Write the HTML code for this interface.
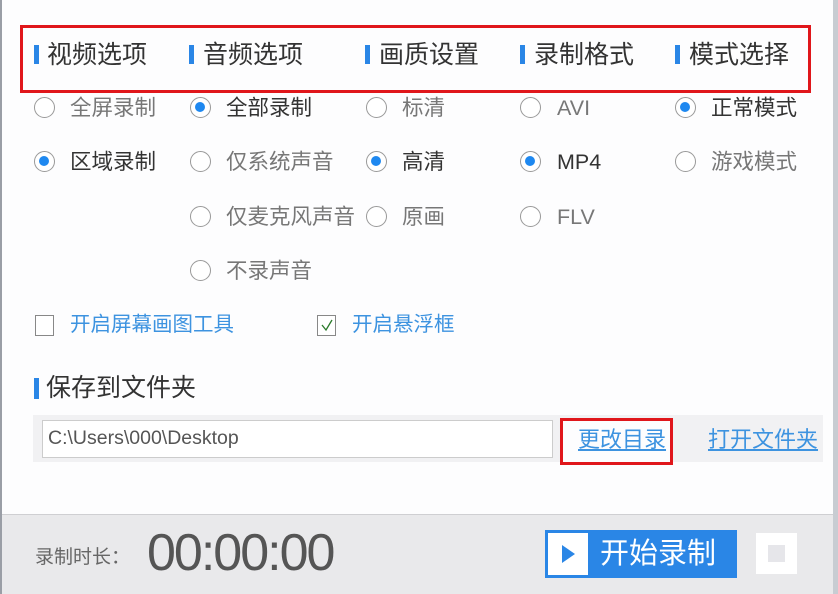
<!DOCTYPE html>
<html><head><meta charset="utf-8"><style>
*{margin:0;padding:0;box-sizing:border-box}
body{width:838px;height:594px;background:#fdfdfe;position:relative;overflow:hidden;font-family:"Liberation Sans","Noto Sans CJK SC",sans-serif}
.a{position:absolute;white-space:nowrap}
.h{font-size:25px;color:#333;line-height:30px}
.bar{position:absolute;width:5px;height:19px;background:#2a86e6}
.r{position:absolute;width:21px;height:21px;border:1.5px solid #999;border-radius:50%;background:#fff}
.r.on::after{content:"";position:absolute;left:4px;top:4px;width:10px;height:10px;border-radius:50%;background:#1e88f0}
.t{font-size:21.5px;color:#777;line-height:24px}
.t.d{color:#333}
.lk{font-size:20.5px;color:#3d93e0;line-height:24px}
</style></head><body>
<div class="a" style="left:0;top:0;width:2px;height:594px;background:#9a9ea6"></div>
<div class="a" style="left:833px;top:0;width:5px;height:594px;background:#c8ccd2"></div>

<div class="a" style="left:20px;top:25px;width:791px;height:68px;border:3px solid #e0161b"></div>
<div class="bar" style="left:34px;top:45px"></div><div class="a h" style="left:47px;top:40px">视频选项</div>
<div class="bar" style="left:189px;top:45px"></div><div class="a h" style="left:203px;top:40px">音频选项</div>
<div class="bar" style="left:365px;top:45px"></div><div class="a h" style="left:379px;top:40px">画质设置</div>
<div class="bar" style="left:520px;top:45px"></div><div class="a h" style="left:534px;top:40px">录制格式</div>
<div class="bar" style="left:675px;top:45px"></div><div class="a h" style="left:689px;top:40px">模式选择</div>

<div class="r" style="left:34px;top:97px"></div><div class="a t" style="left:70px;top:96px">全屏录制</div>
<div class="r on" style="left:34px;top:151px"></div><div class="a t d" style="left:70px;top:150px">区域录制</div>

<div class="r on" style="left:190px;top:97px"></div><div class="a t d" style="left:226px;top:96px">全部录制</div>
<div class="r" style="left:190px;top:151px"></div><div class="a t" style="left:226px;top:150px">仅系统声音</div>
<div class="r" style="left:190px;top:206px"></div><div class="a t" style="left:226px;top:205px">仅麦克风声音</div>
<div class="r" style="left:190px;top:260px"></div><div class="a t" style="left:226px;top:259px">不录声音</div>

<div class="r" style="left:366px;top:97px"></div><div class="a t" style="left:402px;top:96px">标清</div>
<div class="r on" style="left:366px;top:151px"></div><div class="a t d" style="left:402px;top:150px">高清</div>
<div class="r" style="left:366px;top:206px"></div><div class="a t" style="left:402px;top:205px">原画</div>

<div class="r" style="left:520px;top:97px"></div><div class="a t" style="left:557px;top:96px">AVI</div>
<div class="r on" style="left:520px;top:151px"></div><div class="a t d" style="left:557px;top:150px">MP4</div>
<div class="r" style="left:520px;top:206px"></div><div class="a t" style="left:557px;top:205px">FLV</div>

<div class="r on" style="left:675px;top:97px"></div><div class="a t d" style="left:711px;top:96px">正常模式</div>
<div class="r" style="left:675px;top:151px"></div><div class="a t" style="left:711px;top:150px">游戏模式</div>

<div class="a" style="left:35px;top:315px;width:19px;height:21px;border:1.5px solid #888;background:#fff"></div>
<div class="a lk" style="left:70px;top:313px">开启屏幕画图工具</div>
<div class="a" style="left:317px;top:315px;width:19px;height:21px;border:1.5px solid #888;background:#fff"><svg width="16" height="17" style="position:absolute;left:1px;top:1px"><path d="M3 8 L7 13 L13 3" stroke="#2a7a2a" stroke-width="1.3" fill="none"/></svg></div>
<div class="a lk" style="left:352px;top:313px">开启悬浮框</div>

<div class="bar" style="left:34px;top:378px;height:21px"></div>
<div class="a h" style="left:46px;top:373px">保存到文件夹</div>

<div class="a" style="left:33px;top:415px;width:790px;height:47px;background:#f1f1f3"></div>
<div class="a" style="left:42px;top:420px;width:511px;height:38px;background:#fff;border:1px solid #ccc"></div>
<div class="a" style="left:48px;top:427px;font-size:19.5px;color:#555">C:\Users\000\Desktop</div>
<div class="a" style="left:560px;top:418px;width:113px;height:47px;border:3px solid #e0161b;background:#fdfdfe"></div>
<div class="a lk" style="left:578px;top:428px;font-size:22px;text-decoration:underline">更改目录</div>
<div class="a lk" style="left:708px;top:428px;font-size:22px;text-decoration:underline">打开文件夹</div>

<div class="a" style="left:2px;top:514px;width:831px;height:80px;background:#e9e9eb;border-top:1px solid #cfcfd2"></div>
<div class="a" style="left:35px;top:542px;font-size:19px;color:#666">录制时长：</div>
<div class="a" style="left:147px;top:524px;font-size:52px;color:#555;line-height:58px;letter-spacing:-2px">00:00:00</div>
<div class="a" style="left:545px;top:530px;width:192px;height:48px;background:#2a86e6"></div>
<div class="a" style="left:548px;top:533px;width:40px;height:42px;background:#fff"><svg width="40" height="42"><path d="M14 12 L27 21 L14 30 Z" fill="#2a86e6"/></svg></div>
<div class="a" style="left:600px;top:537px;font-size:29px;color:#fff;line-height:34px">开始录制</div>
<div class="a" style="left:756px;top:533px;width:41px;height:41px;background:#fff"><div class="a" style="left:12px;top:12px;width:17px;height:17px;background:#e6e6ea"></div></div>
</body></html>
